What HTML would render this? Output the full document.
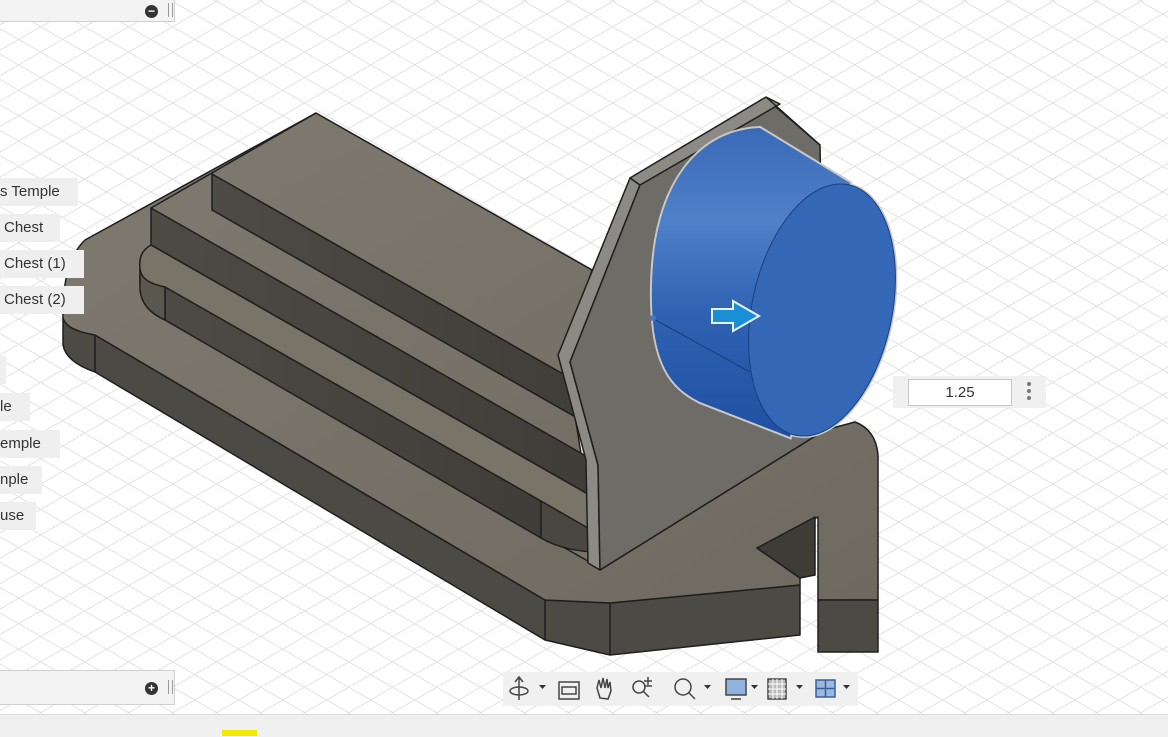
<!DOCTYPE html>
<html><head><meta charset="utf-8"><style>
html,body{margin:0;padding:0}
body{width:1168px;height:736px;overflow:hidden;position:relative;background:#fff;font-family:"Liberation Sans",sans-serif}
#grid{position:absolute;left:0;top:0;width:1168px;height:714px;
background:
repeating-linear-gradient(30deg,transparent 0 21px,#e3e3e3 21px 22px),
repeating-linear-gradient(150deg,transparent 0 21px,#e3e3e3 21px 22px),#fff}
.lab{position:absolute;left:0;height:28px;background:#efefef;font-size:15px;color:#333;line-height:28px;padding-left:4px;box-sizing:border-box}
.panel{position:absolute;left:0;width:175px;background:#f3f3f3;border:1px solid #d0d0d0;border-left:none;box-sizing:border-box}
.circ{position:absolute;width:13px;height:13px;border-radius:50%;background:#333;color:#fff;font-size:12px;line-height:13px;text-align:center;font-weight:bold}
#bottom{position:absolute;left:0;top:714px;width:1168px;height:22px;background:#f0f0f0;border-top:1px solid #ddd}
#tb{position:absolute;left:503px;top:672px;width:355px;height:34px;background:#f0f0f0}
</style></head><body>
<div id="grid"></div>
<svg width="1168" height="714" style="position:absolute;left:0;top:0">
<defs>
<linearGradient id="bl" x1="0" y1="0" x2="0" y2="1"><stop offset="0" stop-color="#3a6ab8"/><stop offset="0.3" stop-color="#4f80c8"/><stop offset="0.6" stop-color="#2f62b2"/><stop offset="1" stop-color="#1f50a2"/></linearGradient>
<linearGradient id="tp" x1="0" y1="0" x2="1" y2="1"><stop offset="0" stop-color="#7f7b70"/><stop offset="1" stop-color="#6e6a60"/></linearGradient>
<linearGradient id="dk" x1="0" y1="0" x2="1" y2="0"><stop offset="0" stop-color="#4e4b44"/><stop offset="1" stop-color="#3f3d38"/></linearGradient>
</defs>
<g stroke="#1e1e1e" stroke-width="1.5" stroke-linejoin="round">
<path d="M63,318 L63,345 Q66,362 95,372 L545,640 L610,655 L800,635 L800,585 L610,603 L545,600 L95,335 Q66,330 63,318Z" fill="#4c4a44"/>
<line x1="95" y1="335" x2="95" y2="372"/><line x1="545" y1="600" x2="545" y2="640"/><line x1="610" y1="603" x2="610" y2="655"/>
<path d="M63,318 Q62,262 85,240 L316,113 L592,270 L565,355 L600,570 L825,430 L855,422 Q876,430 878,455 L878,600 L818,600 L818,517 L757,548 L800,578 L800,585 L610,603 L545,600 L95,335 Q66,330 63,318Z" fill="url(#tp)"/>
<path d="M818,600 L878,600 L878,652 L818,652Z" fill="#4c4a44"/>
<path d="M757,548 L815,517 L815,575 L800,578Z" fill="#3e3c37"/>
<path d="M151,208 L316,113" fill="none"/>
<path d="M212,174 L600,395 L600,431 L212,210Z" fill="url(#dk)"/>
<path d="M151,208 L600,464 L600,501 L151,245Z" fill="url(#dk)"/>
<path d="M151,245 Q138,252 140,268 L140,285 Q142,300 165,320 L600,568 L600,501Z" fill="#787468"/>
<path d="M165,287 L541,501 L541,538 L165,320Z" fill="url(#dk)"/>
<path d="M541,501 L600,535 L600,552 Q565,552 541,538Z" fill="#4a4741"/>
<path d="M140,268 Q140,282 165,287 L165,320 Q142,310 140,290Z" fill="#5a574f"/>
<path d="M558,355 L630,178 L640,185 L570,362 L598,465 L600,570 L588,563 L586,460Z" fill="#8b8a85"/>
<path d="M570,362 L640,185 L768,100 L820,145 L825,430 L600,570 L598,465Z" fill="#6d6c67"/>
<path d="M630,178 L766,97 L780,104 L640,185Z" fill="#8b8a85"/>
<line x1="766" y1="97" x2="820" y2="145"/>
</g>
<g stroke="#c8c8c8" stroke-width="4" fill="#c8c8c8">
<path d="M760,128 C700,130 654,182 652,285 C650,365 672,388 700,402 L790,437 L850,183Z"/>
<ellipse cx="822" cy="310" rx="70" ry="128" transform="rotate(12 822 310)"/>
</g>
<path d="M760,128 C700,130 654,182 652,285 C650,365 672,388 700,402 L790,437 L850,183Z" fill="url(#bl)"/>
<path d="M652,318 L750,372" stroke="#1a3f80" stroke-width="1.2"/>
<ellipse cx="822" cy="310" rx="70" ry="128" fill="#3467b5" stroke="#1a3f80" stroke-width="1" transform="rotate(12 822 310)"/>
<circle cx="653" cy="318" r="3" fill="#4a78c0"/>
<path d="M712,309 L733,309 L733,301 L759,316 L733,331 L733,323 L712,323Z" fill="#1a8fd6" stroke="#e8f2fa" stroke-width="2"/>
</svg>
<div class="panel" style="top:-1px;height:23px"><div class="circ" style="left:145px;top:5px">−</div><div style="position:absolute;left:168px;top:3px;width:3px;height:14px;border-left:1px solid #999;border-right:1px solid #999"></div></div>
<div class="panel" style="top:670px;height:35px"><div class="circ" style="left:145px;top:11px">+</div><div style="position:absolute;left:168px;top:9px;width:3px;height:14px;border-left:1px solid #999;border-right:1px solid #999"></div></div>
<div class="lab" style="top:178px;width:78px;padding-left:0">s Temple</div>
<div class="lab" style="top:214px;width:60px">Chest</div>
<div class="lab" style="top:250px;width:84px">Chest (1)</div>
<div class="lab" style="top:286px;width:84px">Chest (2)</div>
<div class="lab" style="top:356px;width:6px"></div>
<div class="lab" style="top:393px;width:30px;padding-left:0">le</div>
<div class="lab" style="top:430px;width:60px;padding-left:0">emple</div>
<div class="lab" style="top:466px;width:42px;padding-left:0">nple</div>
<div class="lab" style="top:502px;width:36px;padding-left:0">use</div>
<div style="position:absolute;left:893px;top:376px;width:153px;height:32px;background:#f0f0f0">
<div style="position:absolute;left:15px;top:3px;width:102px;height:25px;background:#fff;border:1px solid #c8c8c8;text-align:center;font-size:15px;line-height:25px;color:#333">1.25</div>
<div style="position:absolute;left:134px;top:6px;width:4px;font-size:0">
<div style="width:4px;height:4px;border-radius:2px;background:#777;margin-bottom:3px"></div><div style="width:4px;height:4px;border-radius:2px;background:#777;margin-bottom:3px"></div><div style="width:4px;height:4px;border-radius:2px;background:#777"></div></div>
</div>
<div id="tb">
<svg width="355" height="34" viewBox="0 0 355 34">
<g stroke="#444" fill="none" stroke-width="1.5">
<path d="M16,6 L16,28 M12,10 L16,5 L20,10"/><ellipse cx="16" cy="19" rx="9" ry="4"/>
<rect x="56" y="10" width="20" height="17"/><rect x="59" y="15" width="14" height="7"/>
<path d="M97,26 L94,16 L96,8 L98,16 L100,6 L102,16 L104,7 L105,16 L107,10 L108,19 L105,27Z"/>
<circle cx="136" cy="15" r="6"/><path d="M140,19 L146,25 M145,5 L145,13 M141,9 L149,9 M141,14 L149,14"/>
<circle cx="180" cy="15" r="8"/><path d="M186,21 L192,27"/>
<rect x="223" y="7" width="20" height="16" fill="#8fb4e0"/><path d="M228,27 L238,27"/>
<rect x="265" y="7" width="18" height="20" fill="#bbb"/><path d="M270,7 V27 M274,7 V27 M279,7 V27 M265,12 H283 M265,17 H283 M265,22 H283" stroke="#fff" stroke-width="1"/>
<rect x="313" y="8" width="19" height="17" stroke="#3a5f9a" fill="#9ab8e0"/><path d="M322.5,8 V25 M313,16.5 H332" stroke="#3a5f9a"/>
</g>
<g fill="#333"><path d="M36,13 h7 l-3.5,4z M201,13 h7 l-3.5,4z M248,13 h7 l-3.5,4z M293,13 h7 l-3.5,4z M340,13 h7 l-3.5,4z"/></g>
</svg></div>
<div id="bottom"></div>
<div style="position:absolute;left:222px;top:730px;width:35px;height:6px;background:#f2ea00"></div>
</body></html>
